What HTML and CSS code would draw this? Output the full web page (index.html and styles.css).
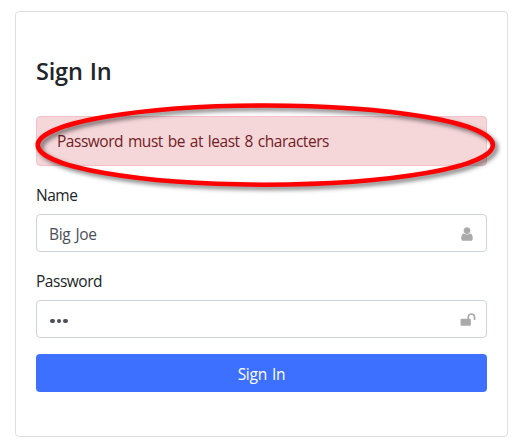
FILE: index.html
```
<!DOCTYPE html>
<html lang="en">
<head>
<meta charset="utf-8">
<title>Sign In</title>
<link rel="stylesheet" href="styles.css">
</head>
<body>
<main class="card">
  <h1 class="title">Sign In</h1>
  <div class="alert" role="alert">Password must be at least 8 characters
    <svg class="highlight" width="480" height="104" viewBox="25 93 480 104" aria-hidden="true">
      <ellipse cx="265.3" cy="145.1" rx="227.6" ry="39.6"/>
    </svg>
  </div>
  <form class="form">
    <div class="field">
      <label class="label" for="name">Name</label>
      <div class="control">
        <input class="input" id="name" type="text" value="Big Joe">
        <svg class="icon icon-user" viewBox="0 0 1792 1792" aria-hidden="true"><path d="M1536 1399q0 109-62.5 187t-150.5 78h-854q-88 0-150.5-78t-62.5-187q0-85 8.5-160.5t31.5-152 58.5-131 94-89 134.5-34.5q131 128 313 128t313-128q76 0 134.5 34.5t94 89 58.5 131 31.5 152 8.5 160.5zm-256-887q0 159-112.5 271.5t-271.5 112.5-271.5-112.5-112.5-271.5 112.5-271.5 271.5-112.5 271.5 112.5 112.5 271.5z"/></svg>
      </div>
    </div>
    <div class="field">
      <label class="label" for="password">Password</label>
      <div class="control">
        <div class="input password" id="password"><i></i><i></i><i></i></div>
        <svg class="icon icon-unlock" viewBox="0 0 1792 1792" aria-hidden="true"><path d="M1728 576v256q0 26-19 45t-45 19h-64q-26 0-45-19t-19-45v-256q0-106-75-181t-181-75-181 75-75 181v192h96q40 0 68 28t28 68v576q0 40-28 68t-68 28h-960q-40 0-68-28t-28-68v-576q0-40 28-68t68-28h672v-192q0-185 131.5-316.5t316.5-131.5 316.5 131.5 131.5 316.5z"/></svg>
      </div>
    </div>
    <button class="button" type="button">Sign In</button>
  </form>
</main>
</body>
</html>
```
FILE: styles.css
```
* {
  box-sizing: border-box;
}

body {
  margin: 0;
  padding: 11px 17px 11px 15px;
  background: #fff;
  color: #212529;
  font: 15.5px/24px "Open Sans", "Noto Sans", sans-serif;
  letter-spacing: -0.47px;
  word-spacing: 1.3px;
}

.card {
  height: 426px;
  padding: 45px 20px 20px;
  border: 1px solid #dfdfdf;
  border-radius: 4px;
}

.title {
  margin: 0 0 30px;
  height: 29px;
  font-size: 23.5px;
  line-height: 29px;
  font-weight: 550;
  letter-spacing: -0.2px;
}

.alert {
  position: relative;
  height: 50px;
  padding: 12px 20px;
  border: 1px solid #f1c2c7;
  border-radius: 4px;
  background: #f5d7da;
  color: #721c24;
}

.highlight {
  position: absolute;
  left: -12px;
  top: -24px;
  fill: none;
  stroke: #f00;
  stroke-width: 4.6;
  filter: drop-shadow(3px 3px 2px rgba(0, 0, 0, 0.5));
  pointer-events: none;
}

.form {
  display: flex;
  flex-direction: column;
  gap: 16px;
  margin-top: 16px;
}

.field {
  display: flex;
  flex-direction: column;
  gap: 8px;
}

.label {
  position: relative;
  top: 1px;
}

.control {
  position: relative;
  height: 38px;
}

.input {
  display: block;
  width: 100%;
  height: 38px;
  margin: 0;
  padding: 2px 12px 0;
  border: 1px solid #ced4da;
  border-radius: 4px;
  background: #fff;
  color: #495057;
  font: inherit;
  letter-spacing: -0.3px;
  word-spacing: inherit;
}

.password {
  display: flex;
  align-items: center;
  gap: 2px;
  padding: 4px 13px 0;
}

.password i {
  width: 4.5px;
  height: 4.5px;
  border-radius: 50%;
  background: #495057;
}

.icon {
  position: absolute;
  top: 12px;
  width: 16px;
  height: 16px;
  fill: #aaa;
}

.icon-user {
  right: 12.5px;
}

.icon-unlock {
  right: 11px;
}

.button {
  height: 38px;
  padding: 1px 0 0;
  border: 0;
  border-radius: 4px;
  background: #3e70ff;
  color: #fff;
  font: inherit;
  letter-spacing: -0.25px;
  word-spacing: inherit;
}
```
